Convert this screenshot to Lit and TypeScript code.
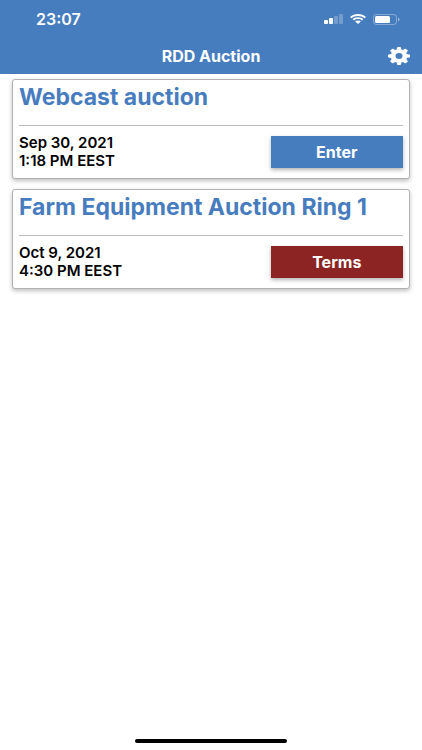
import { LitElement, html, css } from "lit";
import { customElement, property } from "lit/decorators.js";

@customElement("status-bar")
class StatusBar extends LitElement {
  static styles = css`
    :host {
      display: flex;
      align-items: center;
      justify-content: space-between;
      height: 38px;
      padding: 0 22px 0 36px;
      color: #fff;
    }
    .time {
      font-size: 16px;
      line-height: 18px;
      font-weight: 600;
    }
    .icons {
      display: flex;
      align-items: center;
      gap: 7px;
    }
    svg {
      display: block;
      fill: #fff;
    }
  `;

  render() {
    return html`
      <span class="time">23:07</span>
      <div class="icons">
        <svg width="19" height="10" viewBox="0 0 19 10" role="img" aria-label="Signal">
          <rect x="0" y="6" width="4" height="4" rx="1" />
          <rect x="5" y="4" width="4" height="6" rx="1" />
          <rect x="10" y="2" width="4" height="8" rx="1" opacity="0.25" />
          <rect x="15" y="0" width="4" height="10" rx="1" opacity="0.25" />
        </svg>
        <svg width="16" height="10" viewBox="0 0 16 10" role="img" aria-label="Wi-Fi">
          <path d="M8 0C4.900 0 2.100 1.100 0 2.900L1.400 4.200C3.200 2.800 5.500 2 8 2S12.800 2.800 14.600 4.200L16 2.900C13.900 1.100 11.100 0 8 0Z" />
          <path d="M8 3.200C5.900 3.200 4 3.900 2.600 5.100L4.100 6.400C5.200 5.600 6.500 5.100 8 5.100S10.800 5.600 11.900 6.400L13.400 5.100C12 3.900 10.100 3.200 8 3.200Z" />
          <path d="M8 6.400C6.900 6.400 5.900 6.800 5.200 7.400L8 10L10.800 7.400C10.100 6.800 9.100 6.400 8 6.400Z" />
        </svg>
        <svg width="27" height="11" viewBox="0 0 27 11" role="img" aria-label="Battery">
          <rect x="0.500" y="0.500" width="23" height="10" rx="2.800" fill="none" stroke="#fff" stroke-opacity="0.35" />
          <rect x="2" y="2" width="15" height="7" rx="1.500" />
          <path d="M25 3.700V7.300C26 7 26.600 6.300 26.600 5.500S26 4 25 3.700Z" opacity="0.5" />
        </svg>
      </div>
    `;
  }
}

@customElement("auction-card")
class AuctionCard extends LitElement {
  @property() name = "";
  @property() date = "";
  @property() time = "";
  @property() action = "";
  @property({ type: Boolean }) terms = false;

  static styles = css`
    :host {
      display: block;
      padding: 4px 6px 8px;
      border: 1px solid #b2b2b2;
      border-radius: 3px;
      background: #fff;
      box-shadow: 0 2px 4px rgba(0, 0, 0, 0.25);
    }
    .title {
      margin: 0;
      padding-bottom: 15px;
      border-bottom: 1px solid #bcbcbc;
      color: #477dbe;
      font-size: 23px;
      line-height: 26px;
      font-weight: 700;
    }
    .row {
      display: flex;
      align-items: center;
      justify-content: space-between;
      padding-top: 8px;
    }
    .when {
      color: #000;
      font-size: 15px;
      line-height: 18px;
      font-weight: 600;
    }
    .when span {
      display: block;
    }
    .action {
      width: 34.5%;
      height: 32px;
      border: 0;
      padding: 0;
      background: #467dbe;
      color: #fff;
      font: inherit;
      font-size: 16px;
      line-height: 18px;
      font-weight: 700;
      box-shadow: 0 2px 4px rgba(0, 0, 0, 0.3);
      cursor: pointer;
    }
    .action.terms {
      background: #8b2423;
    }
  `;

  render() {
    return html`
      <h2 class="title">${this.name}</h2>
      <div class="row">
        <div class="when"><span>${this.date}</span><span>${this.time}</span></div>
        <button class="action ${this.terms ? "terms" : ""}">${this.action}</button>
      </div>
    `;
  }
}

@customElement("app-root")
class AppRoot extends LitElement {
  static styles = css`
    :host {
      display: flex;
      flex-direction: column;
      min-height: 100vh;
      background: #fff;
      font-family: Inter, "Liberation Sans", sans-serif;
    }
    .top {
      background: #467dbe;
      color: #fff;
    }
    .nav {
      display: grid;
      grid-template-columns: 1fr auto 1fr;
      align-items: center;
      height: 36px;
      padding: 0 12px;
    }
    .heading {
      grid-column: 2;
      margin: 0;
      font-size: 16px;
      line-height: 18px;
      font-weight: 700;
    }
    .settings {
      justify-self: end;
      display: block;
      border: 0;
      padding: 0;
      background: none;
      color: #fff;
      cursor: pointer;
    }
    .settings svg {
      display: block;
      fill: currentColor;
    }
    .list {
      flex: 1;
      display: flex;
      flex-direction: column;
      gap: 10px;
      padding: 5px 12px;
    }
    .home {
      align-self: center;
      width: 36%;
      height: 4px;
      margin-bottom: 7px;
      border-radius: 2px;
      background: #000;
    }
  `;

  render() {
    return html`
      <header class="top">
        <status-bar></status-bar>
        <div class="nav">
          <h1 class="heading">RDD Auction</h1>
          <button class="settings" aria-label="Settings">
            <svg width="22" height="18" viewBox="-10 -10 20 20" preserveAspectRatio="none">
              <circle r="5.400" fill="none" stroke="currentColor" stroke-width="4.400" />
              <path id="teeth" d="M-2.300 -7L-1.700 -9.500Q-1.600 -10 -1.100 -10H1.100Q1.600 -10 1.700 -9.500L2.300 -7ZM-2.300 7L-1.700 9.500Q-1.600 10 -1.100 10H1.100Q1.600 10 1.700 9.500L2.300 7ZM-7 -2.300L-9.500 -1.700Q-10 -1.600 -10 -1.100V1.100Q-10 1.600 -9.500 1.700L-7 2.300ZM7 -2.300L9.500 -1.700Q10 -1.600 10 -1.100V1.100Q10 1.600 9.500 1.700L7 2.300Z" />
              <use href="#teeth" transform="rotate(45)" />
            </svg>
          </button>
        </div>
      </header>
      <main class="list">
        <auction-card name="Webcast auction" date="Sep 30, 2021" time="1:18 PM EEST" action="Enter"></auction-card>
        <auction-card name="Farm Equipment Auction Ring 1" date="Oct 9, 2021" time="4:30 PM EEST" action="Terms" terms></auction-card>
      </main>
      <div class="home"></div>
    `;
  }
}
